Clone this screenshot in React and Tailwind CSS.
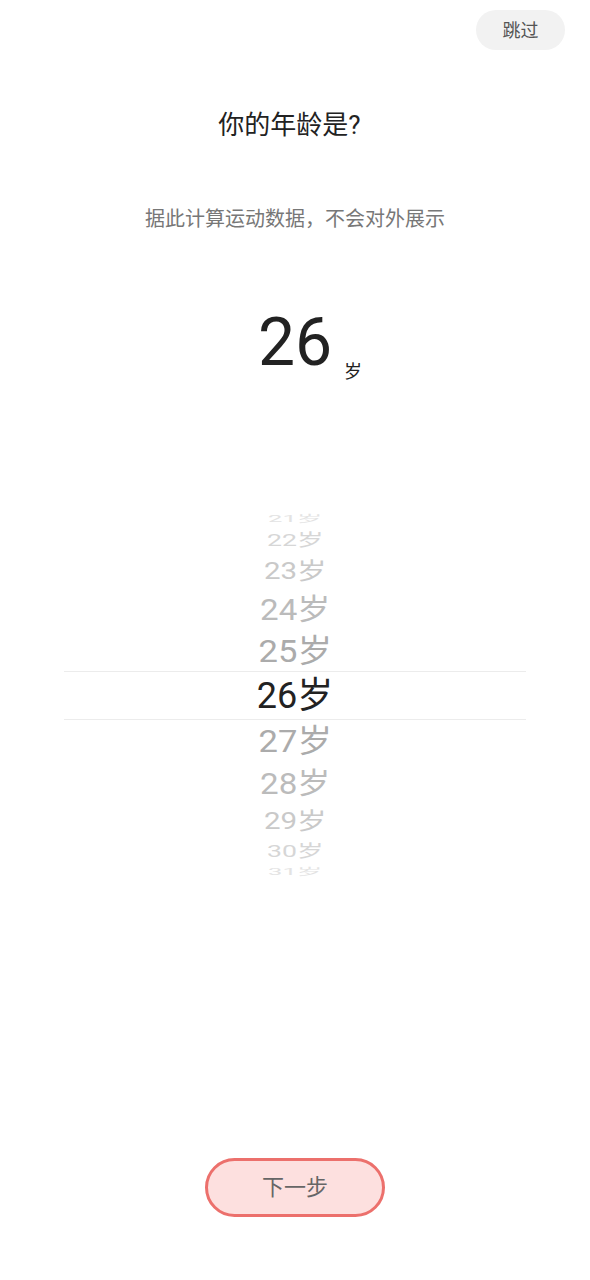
import { useState } from 'react';

const FONT = "font-['Roboto','Noto_Sans_CJK_SC',sans-serif]";

// wheel rows around the selected age: slot height, x/y squash, grey level
const WHEEL = [
  { d: -5, h: 13, sx: 0.71, sy: 0.25, c: '#e3e3e3' },
  { d: -4, h: 29, sx: 0.74, sy: 0.48, c: '#d6d6d6' },
  { d: -3, h: 34, sx: 0.82, sy: 0.64, c: '#c9c9c9' },
  { d: -2, h: 43, sx: 0.92, sy: 0.81, c: '#bbbbbb' },
  { d: -1, h: 40, sx: 0.96, sy: 0.88, c: '#ababab' },
  { d: 0, h: 49, sx: 1, sy: 1, c: '#222222' },
  { d: 1, h: 41, sx: 0.96, sy: 0.88, c: '#ababab' },
  { d: 2, h: 45, sx: 0.92, sy: 0.81, c: '#bbbbbb' },
  { d: 3, h: 29, sx: 0.82, sy: 0.64, c: '#c9c9c9' },
  { d: 4, h: 31, sx: 0.74, sy: 0.48, c: '#d6d6d6' },
  { d: 5, h: 11, sx: 0.71, sy: 0.25, c: '#e3e3e3' },
];

export default function App() {
  const [age] = useState(26);

  return (
    <div className={`w-[590px] h-[1280px] bg-white flex flex-col ${FONT}`}>
      <div className="flex justify-end pt-[10px] pr-[25px]">
        <button className="w-[89px] h-[40px] rounded-full bg-[#f2f2f2] text-[18px] text-[#555]">跳过</button>
      </div>

      <div className="mt-[57px] pr-[11px] text-center text-[26px] leading-[36px] text-[#222]">你的年龄是?</div>
      <div className="mt-[62px] text-center text-[20px] leading-[28px] text-[#777]">据此计算运动数据，不会对外展示</div>

      <div className="mt-[77px] flex justify-center items-end">
        <span className="ml-[30px] text-[66px] leading-[66px] text-[#222]">{age}</span>
        <span className="ml-[12px] mb-[-5px] text-[18px] leading-[18px] text-[#222]">岁</span>
      </div>

      <div className="mt-[136px] mx-[64px] flex flex-col">
        {WHEEL.map((r) => (
          <div
            key={r.d}
            className={`flex items-center justify-center ${r.d === 0 ? 'border-y border-[#ececec]' : ''}`}
            style={{ height: r.h }}
          >
            <span
              className="text-[36px] leading-[36px] whitespace-nowrap"
              style={{ color: r.c, transform: `scale(${r.sx}, ${r.sy})` }}
            >
              {age + r.d}岁
            </span>
          </div>
        ))}
      </div>

      <div className="mt-auto mb-[63px] flex justify-center">
        <button className="w-[180px] h-[59px] rounded-full border-[3px] border-[#ec706c] bg-[#fde0df] text-[22px] text-[#666]">
          下一步
        </button>
      </div>
    </div>
  );
}
